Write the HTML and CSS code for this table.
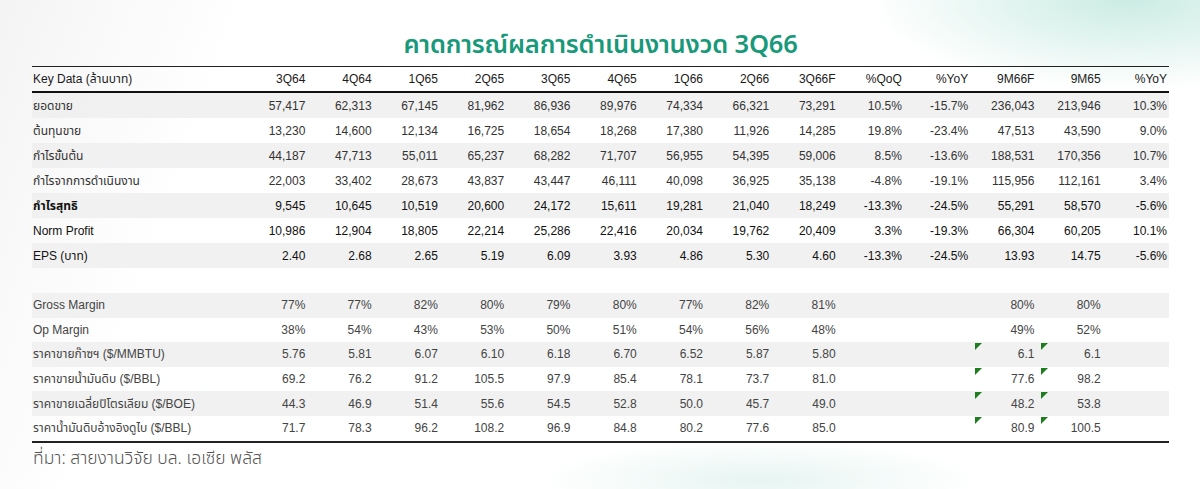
FILE: index.html
```html
<!DOCTYPE html>
<html lang="th">
<head>
<meta charset="utf-8">
<title>คาดการณ์ผลการดำเนินงานงวด 3Q66</title>
<link rel="stylesheet" href="styles.css">
</head>
<body>
<div class="page">
  <h1 class="title">คาดการณ์ผลการดำเนินงานงวด 3Q66</h1>
  <table class="data">
    <colgroup>
      <col class="c-label">
      <col span="14" class="c-num">
    </colgroup>
    <thead>
      <tr>
        <th class="label">Key Data (ล้านบาท)</th>
        <th>3Q64</th><th>4Q64</th><th>1Q65</th><th>2Q65</th><th>3Q65</th><th>4Q65</th><th>1Q66</th><th>2Q66</th><th>3Q66F</th><th>%QoQ</th><th>%YoY</th><th>9M66F</th><th>9M65</th><th>%YoY</th>
      </tr>
    </thead>
    <tbody class="main">
      <tr class="shade"><td class="label">ยอดขาย</td><td>57,417</td><td>62,313</td><td>67,145</td><td>81,962</td><td>86,936</td><td>89,976</td><td>74,334</td><td>66,321</td><td>73,291</td><td>10.5%</td><td>-15.7%</td><td>236,043</td><td>213,946</td><td>10.3%</td></tr>
      <tr><td class="label">ต้นทุนขาย</td><td>13,230</td><td>14,600</td><td>12,134</td><td>16,725</td><td>18,654</td><td>18,268</td><td>17,380</td><td>11,926</td><td>14,285</td><td>19.8%</td><td>-23.4%</td><td>47,513</td><td>43,590</td><td>9.0%</td></tr>
      <tr class="shade"><td class="label">กำไรขั้นต้น</td><td>44,187</td><td>47,713</td><td>55,011</td><td>65,237</td><td>68,282</td><td>71,707</td><td>56,955</td><td>54,395</td><td>59,006</td><td>8.5%</td><td>-13.6%</td><td>188,531</td><td>170,356</td><td>10.7%</td></tr>
      <tr><td class="label">กำไรจากการดำเนินงาน</td><td>22,003</td><td>33,402</td><td>28,673</td><td>43,837</td><td>43,447</td><td>46,111</td><td>40,098</td><td>36,925</td><td>35,138</td><td>-4.8%</td><td>-19.1%</td><td>115,956</td><td>112,161</td><td>3.4%</td></tr>
      <tr class="shade dark"><td class="label strong">กำไรสุทธิ</td><td>9,545</td><td>10,645</td><td>10,519</td><td>20,600</td><td>24,172</td><td>15,611</td><td>19,281</td><td>21,040</td><td>18,249</td><td>-13.3%</td><td>-24.5%</td><td>55,291</td><td>58,570</td><td>-5.6%</td></tr>
      <tr class="dark"><td class="label">Norm Profit</td><td>10,986</td><td>12,904</td><td>18,805</td><td>22,214</td><td>25,286</td><td>22,416</td><td>20,034</td><td>19,762</td><td>20,409</td><td>3.3%</td><td>-19.3%</td><td>66,304</td><td>60,205</td><td>10.1%</td></tr>
      <tr class="shade dark"><td class="label">EPS (บาท)</td><td>2.40</td><td>2.68</td><td>2.65</td><td>5.19</td><td>6.09</td><td>3.93</td><td>4.86</td><td>5.30</td><td>4.60</td><td>-13.3%</td><td>-24.5%</td><td>13.93</td><td>14.75</td><td>-5.6%</td></tr>
      <tr class="spacer"><td colspan="15"></td></tr>
    </tbody>
    <tbody class="ratios">
      <tr class="shade"><td class="label">Gross Margin</td><td>77%</td><td>77%</td><td>82%</td><td>80%</td><td>79%</td><td>80%</td><td>77%</td><td>82%</td><td>81%</td><td></td><td></td><td>80%</td><td>80%</td><td></td></tr>
      <tr><td class="label">Op Margin</td><td>38%</td><td>54%</td><td>43%</td><td>53%</td><td>50%</td><td>51%</td><td>54%</td><td>56%</td><td>48%</td><td></td><td></td><td>49%</td><td>52%</td><td></td></tr>
      <tr class="shade"><td class="label">ราคาขายก๊าซฯ ($/MMBTU)</td><td>5.76</td><td>5.81</td><td>6.07</td><td>6.10</td><td>6.18</td><td>6.70</td><td>6.52</td><td>5.87</td><td>5.80</td><td></td><td></td><td class="flag">6.1</td><td class="flag">6.1</td><td></td></tr>
      <tr><td class="label">ราคาขายน้ำมันดิบ ($/BBL)</td><td>69.2</td><td>76.2</td><td>91.2</td><td>105.5</td><td>97.9</td><td>85.4</td><td>78.1</td><td>73.7</td><td>81.0</td><td></td><td></td><td class="flag">77.6</td><td class="flag">98.2</td><td></td></tr>
      <tr class="shade"><td class="label">ราคาขายเฉลี่ยปิโตรเลียม ($/BOE)</td><td>44.3</td><td>46.9</td><td>51.4</td><td>55.6</td><td>54.5</td><td>52.8</td><td>50.0</td><td>45.7</td><td>49.0</td><td></td><td></td><td class="flag">48.2</td><td class="flag">53.8</td><td></td></tr>
      <tr class="last"><td class="label">ราคาน้ำมันดิบอ้างอิงดูไบ ($/BBL)</td><td>71.7</td><td>78.3</td><td>96.2</td><td>108.2</td><td>96.9</td><td>84.8</td><td>80.2</td><td>77.6</td><td>85.0</td><td></td><td></td><td class="flag">80.9</td><td class="flag">100.5</td><td></td></tr>
    </tbody>
  </table>
  <p class="source">ที่มา: สายงานวิจัย บล. เอเซีย พลัส</p>
</div>
</body>
</html>
```

FILE: styles.css
```css
html, body {
  margin: 0;
  padding: 0;
}

body {
  width: 1200px;
  height: 489px;
  overflow: hidden;
  background:
    radial-gradient(ellipse 260px 90px at 1130px 0px, rgba(160, 220, 205, 0.55), rgba(255, 255, 255, 0) 100%),
    radial-gradient(ellipse 220px 40px at 760px 480px, rgba(200, 232, 225, 0.45), rgba(255, 255, 255, 0) 100%),
    linear-gradient(110deg, #f4f4f4 0%, #ffffff 18%, #ffffff 100%);
  font-family: "Liberation Sans", Arial, "Noto Sans Thai", "DejaVu Sans", sans-serif;
}

.page {
  padding: 0 31px 0 32px;
}

.title {
  margin: 0;
  padding-top: 28px;
  line-height: 34px;
  box-sizing: border-box;
  height: 66px;
  text-align: center;
  font-family: "Noto Sans Thai", "Noto Sans", "DejaVu Sans", sans-serif;
  font-size: 25.5px;
  font-weight: 600;
  color: #17997a;
  letter-spacing: -0.2px;
}

.data {
  width: 1137px;
  border-collapse: collapse;
  table-layout: fixed;
  font-size: 12px;
  color: #333;
}

.c-label { width: 209px; }
.c-num { width: 66.28px; }

.data th,
.data td {
  padding: 0 2px 0 0;
  text-align: right;
  white-space: nowrap;
  font-weight: normal;
}

.data .label {
  text-align: left;
  padding-left: 1px;
}

.data thead tr {
  border-top: 1px solid #222;
  border-bottom: 2px solid #111;
}

.data thead th {
  height: 24px;
  color: #1a1a1a;
}

.main tr td {
  height: 25px;
}

.ratios tr td {
  height: 24.6px;
  color: #444;
}

.shade td {
  background: rgba(238, 238, 238, 0.85);
}

.data .strong {
  font-weight: bold;
}

.dark td {
  color: #111;
}

.spacer td {
  height: 23px;
  background: transparent;
}

.ratios tr.last {
  border-bottom: 2px solid #222;
}

.flag {
  position: relative;
}

.flag::before {
  content: "";
  position: absolute;
  left: 5px;
  top: 1px;
  width: 0;
  height: 0;
  border-top: 7px solid #1e7d1e;
  border-right: 7px solid transparent;
}

.source {
  margin: 5px 0 0 1px;
  font-family: "Noto Sans Thai", "Noto Sans", "DejaVu Sans", sans-serif;
  font-size: 17.5px;
  font-weight: 300;
  line-height: 22px;
  color: #555;
}
```
